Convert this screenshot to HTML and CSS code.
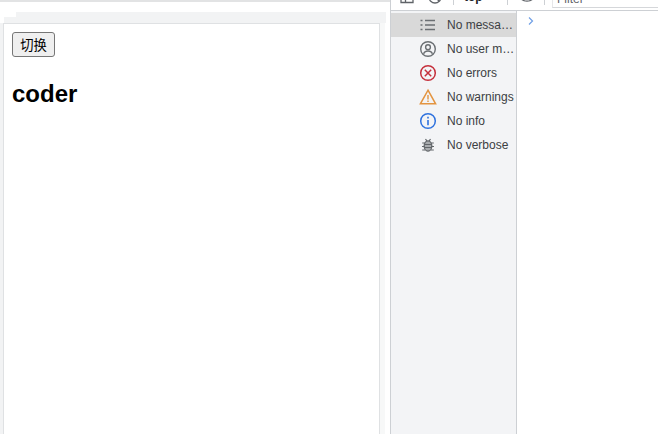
FILE: index.html
```html
<!DOCTYPE html>
<html lang="zh">
<head>
<meta charset="utf-8">
<title>coder</title>
<link rel="stylesheet" href="styles.css">
</head>
<body>
<div class="page">
  <div class="left">
    <div class="top-strip"></div>
    <div class="tabs tabs-back"></div>
    <div class="tabs tabs-front"></div>
    <main class="card">
      <button class="switch" type="button">切换</button>
      <h2 class="title">coder</h2>
    </main>
  </div>
  <div class="devtools">
    <div class="toolbar">
      <svg class="tool tool-panel" width="14" height="14" viewBox="0 0 14 14"><path d="M1 1.500h12v11H1zM5.500 1.500v11" fill="none" stroke="#5f6368" stroke-width="1.300"/></svg>
      <svg class="tool tool-block" width="14" height="14" viewBox="0 0 14 14"><circle cx="7" cy="7" r="6" fill="none" stroke="#5f6368" stroke-width="1.300"/><path d="M2.800 2.800l8.400 8.400" stroke="#5f6368" stroke-width="1.300"/></svg>
      <span class="sep sep-a"></span>
      <span class="context">top</span>
      <span class="sep sep-b"></span>
      <svg class="tool tool-eye" width="16" height="14" viewBox="0 0 16 14"><path d="M1 7a7.500 6.500 0 0 1 14 0a7.500 6.500 0 0 1-14 0z" fill="none" stroke="#5f6368" stroke-width="1.300"/><circle cx="8" cy="7" r="2.500" fill="#5f6368"/></svg>
      <span class="sep sep-c"></span>
      <div class="filter"><span>Filter</span></div>
    </div>
    <div class="panes">
      <aside class="sidebar">
        <div class="row selected">
          <svg class="icon" width="18" height="18" viewBox="0 0 18 18"><path d="M6 4.500h10M6 9h10M6 13.500h10M1.500 4.500h2M1.500 9h2M1.500 13.500h2" stroke="#6b6f73" stroke-width="1.400" fill="none"/></svg>
          <span class="label">No messa…</span>
        </div>
        <div class="row">
          <svg class="icon" width="18" height="18" viewBox="0 0 18 18"><circle cx="9" cy="9" r="7.300" fill="none" stroke="#6b6f73" stroke-width="1.400"/><circle cx="9" cy="7.200" r="2.400" fill="none" stroke="#6b6f73" stroke-width="1.400"/><path d="M4.500 13.700c1-2 2.800-2.700 4.500-2.700s3.500.7 4.500 2.700" fill="none" stroke="#6b6f73" stroke-width="1.400"/></svg>
          <span class="label">No user m…</span>
        </div>
        <div class="row">
          <svg class="icon" width="18" height="18" viewBox="0 0 18 18"><circle cx="9" cy="9" r="7.300" fill="none" stroke="#c5303c" stroke-width="1.500"/><path d="M5.800 5.800l6.400 6.400M12.200 5.800l-6.400 6.400" stroke="#c5303c" stroke-width="1.500" fill="none"/></svg>
          <span class="label">No errors</span>
        </div>
        <div class="row">
          <svg class="icon" width="18" height="18" viewBox="0 0 18 18"><path d="M9 2.200L16.600 15.800H1.400z" fill="none" stroke="#e39440" stroke-width="1.500"/><path d="M9 7v4.500M9 12.500v1.500" stroke="#e39440" stroke-width="1.400" fill="none"/></svg>
          <span class="label">No warnings</span>
        </div>
        <div class="row">
          <svg class="icon" width="18" height="18" viewBox="0 0 18 18"><circle cx="9" cy="9" r="7.300" fill="none" stroke="#2f72de" stroke-width="1.500"/><path d="M9 8v5.200M9 4.800v1.600" stroke="#2f72de" stroke-width="1.600" fill="none"/></svg>
          <span class="label">No info</span>
        </div>
        <div class="row">
          <svg class="icon" width="18" height="18" viewBox="0 0 18 18"><ellipse cx="9" cy="10" rx="3.800" ry="5.200" fill="#a9acaf" stroke="#63676b" stroke-width="1.300"/><path d="M6.500 3L8 5.200M11.500 3L10 5.200M3.200 7h2.500M12.300 7h2.500M3 10.500h2.500M12.500 10.500h2.500M3.200 14h2.800M12 14h2.800M5.800 8.500h6.400M5.800 11.500h6.400" stroke="#63676b" stroke-width="1.200" fill="none"/></svg>
          <span class="label">No verbose</span>
        </div>
      </aside>
      <section class="console">
        <svg class="prompt" width="8" height="10" viewBox="0 0 8 10"><path d="M2 1.500L5.500 5L2 8.500" fill="none" stroke="#6f9fe6" stroke-width="1.200"/></svg>
      </section>
    </div>
  </div>
</div>
</body>
</html>
```
FILE: styles.css
```css
* { box-sizing: border-box; }
html, body { margin: 0; height: 100%; overflow: hidden; background: #fff; }
body { font-family: "Liberation Sans", "Noto Sans CJK SC", sans-serif; color: #000; }

.page { display: flex; height: 434px; }

.left { width: 390px; flex: none; display: flex; flex-direction: column; padding-right: 4px; }
.top-strip { height: 2px; margin-right: -4px; background: #e2e3e4; }
.tabs { background: #f2f3f4; flex: none; }
.tabs-back { height: 5px; margin: 10px 0 0 16px; }
.tabs-front { height: 6px; margin-left: 4px; }
.card {
  flex: 1;
  margin-left: 3px;
  margin-right: 6px;
  padding: 8px;
  border: 1px solid #dfe1e3;
  border-bottom: 0;
  box-shadow: -3px 0 0 #f2f3f4, 5px 0 0 #f7f8f8;
}

.switch {
  display: block;
  width: 43px;
  height: 25px;
  padding: 0;
  font: 13.33px "Liberation Sans", "Noto Sans CJK SC", sans-serif;
  color: #000;
  background: #efefef;
  border: 1px solid #767676;
  border-radius: 3px;
}
.title { margin: 23px 0 0; font-size: 24px; line-height: 28px; font-weight: 700; }

.devtools { flex: 1; min-width: 0; display: flex; flex-direction: column; border-left: 1px solid #cdd0d4; }
.toolbar {
  height: 11px;
  flex: none;
  display: flex;
  align-items: flex-end;
  overflow: hidden;
  border-bottom: 1px solid #cdd0d4;
  background: #fff;
}
.tool { flex: none; margin-bottom: 6px; }
.tool-panel { margin-left: 9px; }
.tool-block { margin-left: 14px; }
.tool-eye { margin-left: 11px; }
.sep { flex: none; width: 1px; height: 10px; margin-bottom: 5px; background: #cdd0d4; }
.sep-a { margin-left: 11px; }
.sep-b { margin-left: 25px; }
.sep-c { margin-left: 9px; }
.context { flex: none; width: 18px; margin: 0 0 6px 10px; font-size: 12px; line-height: 14px; font-weight: 700; color: #202124; }
.filter {
  flex: 1;
  height: 12px;
  margin: 0 0 2px 7px;
  padding-left: 4px;
  border-bottom: 1px solid #d5d7da;
  border-left: 1px solid #e6e7e9;
  font-size: 12px;
  color: #5f6368;
  display: flex;
  align-items: flex-end;
}
.filter span { line-height: 14px; margin-bottom: 1px; }

.panes { flex: 1; display: flex; min-height: 0; }
.sidebar { width: 126px; flex: none; padding-top: 2px; background: #f3f4f6; border-right: 1px solid #cdd0d4; }
.row { height: 24px; display: flex; align-items: center; font-size: 12px; color: #3c4043; white-space: nowrap; overflow: hidden; }
.row.selected { background: #d9d9d9; }
.icon { flex: none; margin-left: 28px; margin-right: 10px; }
.label { line-height: 14px; }
.console { flex: 1; padding: 5px 0 0 10px; }
.prompt { display: block; }
```
